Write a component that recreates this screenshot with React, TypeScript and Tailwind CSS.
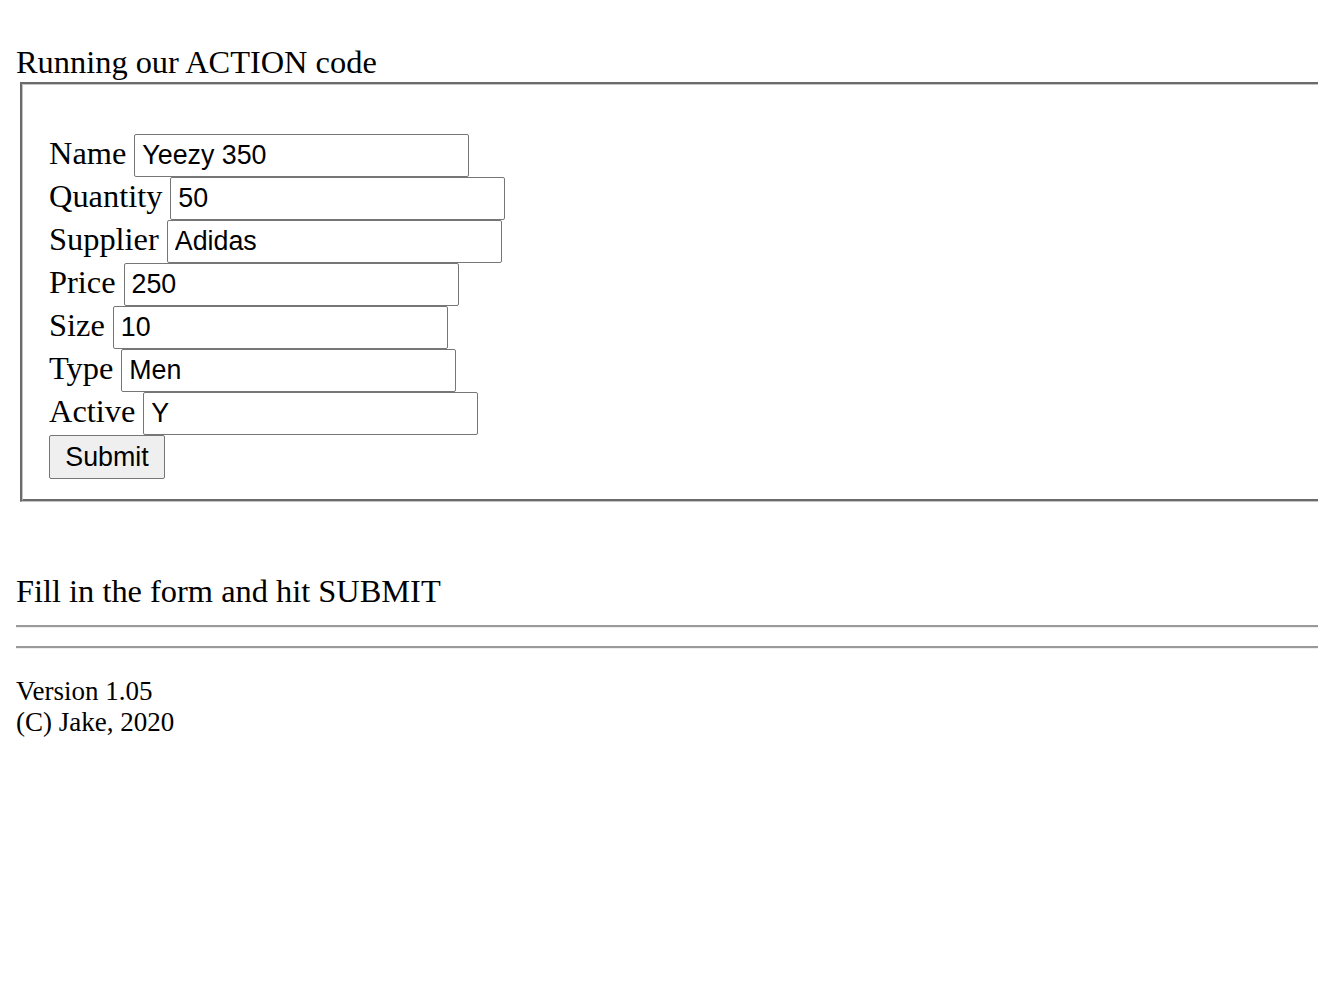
import React from "react";

const rows: { label: string; value: string }[] = [
  { label: "Name", value: "Yeezy 350" },
  { label: "Quantity", value: "50" },
  { label: "Supplier", value: "Adidas" },
  { label: "Price", value: "250" },
  { label: "Size", value: "10" },
  { label: "Type", value: "Men" },
  { label: "Active", value: "Y" },
];

export default function App() {
  return (
    <div className="w-full min-h-[996px] overflow-hidden bg-white">
      <div className="w-[1400px] pl-4 font-['Liberation_Serif',_'Times_New_Roman',_serif] text-[32.4px] text-black">
        <div className="pt-[44px] leading-[37px]">Running our ACTION code</div>
        <div className="mt-[1px] ml-[4px] border-t-2 border-l-2 border-b border-r border-t-[#6b6b6b] border-l-[#6b6b6b] border-b-[#c4c4c4] border-r-[#c4c4c4]">
          <div className="border-t border-l border-b-2 border-r-2 border-t-[#c4c4c4] border-l-[#c4c4c4] border-b-[#6b6b6b] border-r-[#6b6b6b] pt-[49px] pb-[20px] pl-[26px]">
            {rows.map((r) => (
              <div key={r.label} className="flex items-baseline gap-[8px] h-[43px] leading-[37px]">
                <span>{r.label}</span>
                <input
                  type="text"
                  defaultValue={r.value}
                  className="w-[335px] h-[43px] border border-[#767676] rounded-[2px] px-[7px] bg-white text-black font-['Liberation_Sans',_Arial,_sans-serif] text-[26.8px] outline-none"
                />
              </div>
            ))}
            <button
              type="button"
              className="block w-[116px] h-[44px] bg-[#efefef] border border-[#767676] rounded-[2px] text-black font-['Liberation_Sans',_Arial,_sans-serif] text-[26.8px] leading-none"
            >
              Submit
            </button>
          </div>
        </div>
        <div className="mt-[71px] leading-[37px]">Fill in the form and hit SUBMIT</div>
        <div className="mt-[15px] border-t-2 border-t-[#9a9a9a] border-b border-b-[#eeeeee]" />
        <div className="mt-[18px] border-t-2 border-t-[#9a9a9a] border-b border-b-[#eeeeee]" />
        <div className="mt-[27px] text-[27px] leading-[30.5px]">
          <div>Version 1.05</div>
          <div>(C) Jake, 2020</div>
        </div>
      </div>
    </div>
  );
}
